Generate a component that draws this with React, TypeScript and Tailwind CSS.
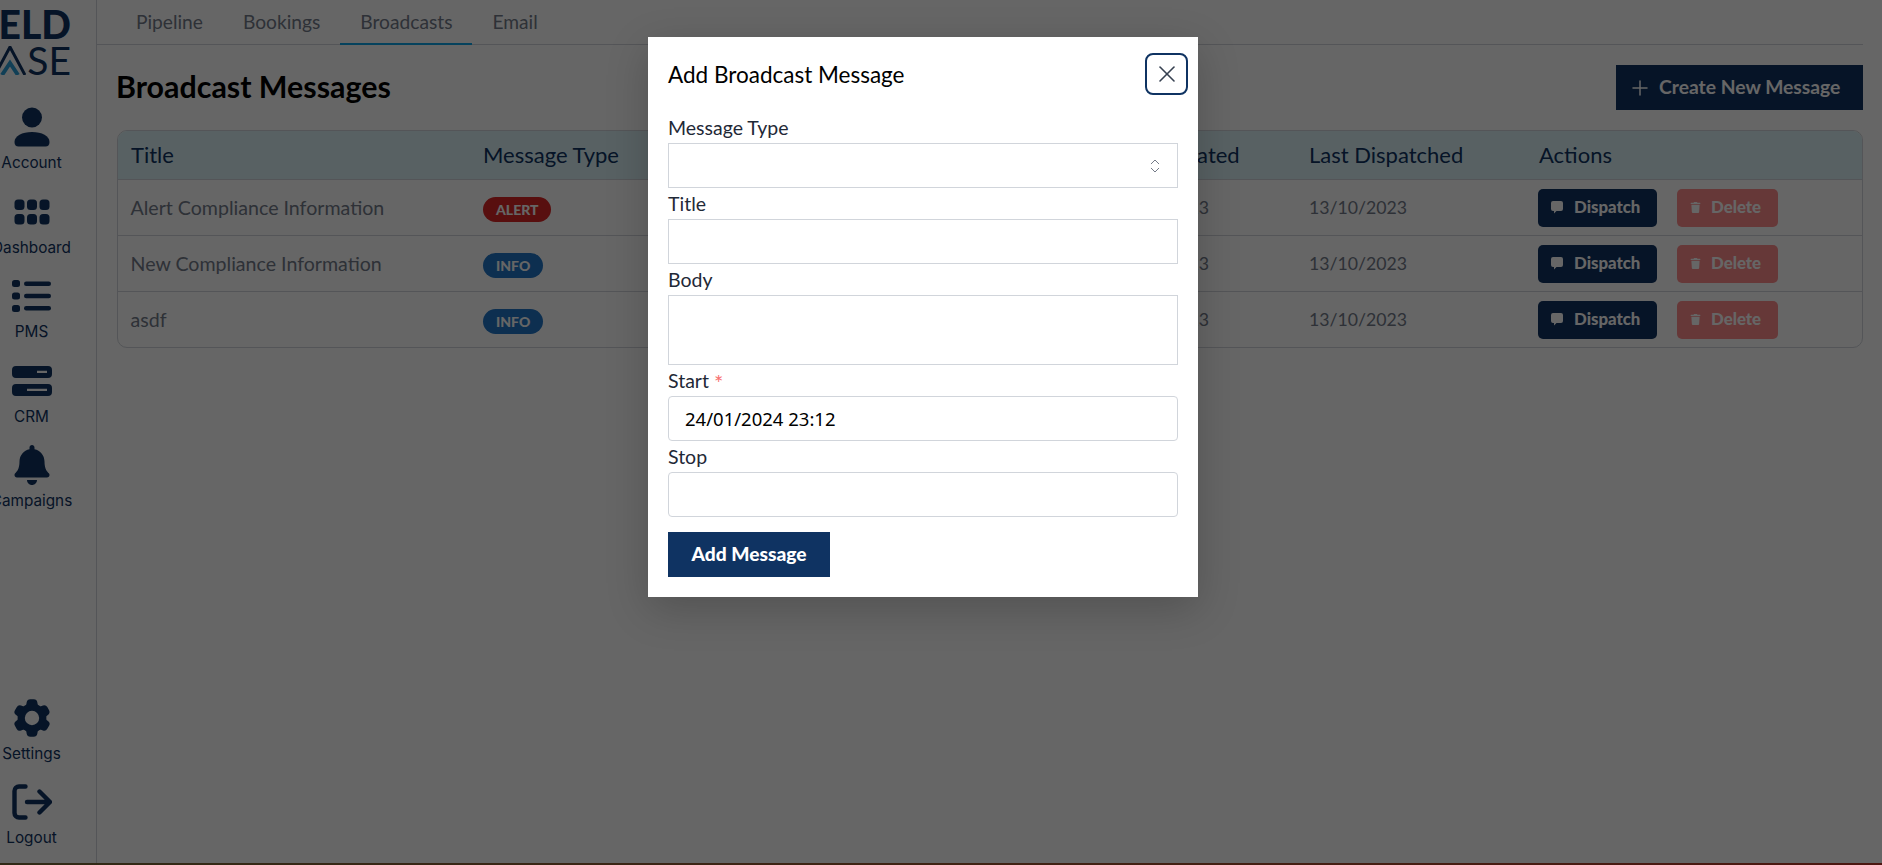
import React from 'react';
import { X, Plus, ChevronsUpDown } from 'lucide-react';
import { FaBell, FaTrash } from 'react-icons/fa';
import { HiCog6Tooth } from 'react-icons/hi2';

const NAVY = '#0f3362';

const AccountIcon = () => (
  <svg width="36" height="40" viewBox="0 0 36 40" fill={NAVY}>
    <circle cx="18" cy="10.5" r="10" />
    <path d="M0.5 35C0.5 29 8 25 18 25s17.5 4 17.5 10c0 3-1.5 4.5-4 4.5H4.5C2 39.5 .5 38 .5 35z" />
  </svg>
);

const DashboardIcon = () => (
  <svg width="36" height="26" viewBox="0 0 36 26" fill={NAVY}>
    <rect x="0.5" y="0.5" width="10" height="10.5" rx="3.5" />
    <rect x="13" y="0.5" width="10" height="10.5" rx="3.5" />
    <rect x="25.5" y="0.5" width="10" height="10.5" rx="3.5" />
    <rect x="0.5" y="15" width="10" height="10.5" rx="3.5" />
    <rect x="13" y="15" width="10" height="10.5" rx="3.5" />
    <rect x="25.5" y="15" width="10" height="10.5" rx="3.5" />
  </svg>
);

const ListIcon = () => (
  <svg width="40" height="32" viewBox="0 0 40 32" fill={NAVY}>
    <rect x="0" y="0" width="8" height="7" rx="2.5" />
    <rect x="0" y="12.5" width="8" height="7" rx="2.5" />
    <rect x="0" y="25" width="8" height="7" rx="2.5" />
    <rect x="12" y="1.5" width="27" height="4.5" rx="2.2" />
    <rect x="12" y="13.7" width="27" height="4.5" rx="2.2" />
    <rect x="12" y="26" width="27" height="4.5" rx="2.2" />
  </svg>
);

const ServerIcon = () => (
  <svg width="40" height="30" viewBox="0 0 40 30" fill={NAVY}>
    <path fillRule="evenodd" d="M4 0h32a4 4 0 0 1 4 4v4a4 4 0 0 1-4 4H4a4 4 0 0 1-4-4V4a4 4 0 0 1 4-4zm21 4.8v2.2h10V4.8H25z" />
    <path fillRule="evenodd" d="M4 18h32a4 4 0 0 1 4 4v4a4 4 0 0 1-4 4H4a4 4 0 0 1-4-4v-4a4 4 0 0 1 4-4zm11 4.8v2.2h20v-2.2H15z" />
  </svg>
);

const LogoutIcon = () => (
  <svg width="40" height="36" viewBox="0 0 40 36" fill="none" stroke={NAVY} strokeWidth="4.4" strokeLinecap="round" strokeLinejoin="round">
    <path d="M13.5 2.5H7a4.5 4.5 0 0 0-4.5 4.5v22A4.5 4.5 0 0 0 7 33.5h6.5" />
    <path d="M15 18h22.5M27.5 7.5 38 18 27.5 28.5" />
  </svg>
);

const BubbleIcon = () => (
  <svg width="12" height="13" viewBox="0 0 12 13" fill="currentColor">
    <path d="M2 0h8a2 2 0 0 1 2 2v6a2 2 0 0 1-2 2H5.5L3 12.6V10H2a2 2 0 0 1-2-2V2a2 2 0 0 1 2-2z" />
  </svg>
);

const topNav = [
  { label: 'Account', icon: <AccountIcon /> },
  { label: 'Dashboard', icon: <DashboardIcon /> },
  { label: 'PMS', icon: <ListIcon /> },
  { label: 'CRM', icon: <ServerIcon /> },
  { label: 'Campaigns', icon: <FaBell size={40} color={NAVY} /> },
];

const bottomNav = [
  { label: 'Settings', icon: <HiCog6Tooth size={46} color={NAVY} /> },
  { label: 'Logout', icon: <LogoutIcon /> },
];

const rows = [
  { title: 'Alert Compliance Information', type: 'ALERT' },
  { title: 'New Compliance Information', type: 'INFO' },
  { title: 'asdf', type: 'INFO' },
];

const gridCols = 'grid grid-cols-[352px_627px_198px_230px_1fr] items-center';

const NavItem = ({ label, icon, bottom }: { label: string; icon: React.ReactNode; bottom?: boolean }) => (
  <div className={`flex flex-col items-center ${bottom ? 'h-[84px]' : 'h-[84.5px]'}`}>
    <div className="h-[50px] flex items-center justify-center">{icon}</div>
    <span className="h-[22px] leading-[22px] text-[15.3px] text-[#0f3362] font-['Inter',sans-serif]">{label}</span>
  </div>
);

const Field = ({ label, required, children }: { label: string; required?: boolean; children: React.ReactNode }) => (
  <div>
    <label className="block h-[31px] leading-[32px] text-[19.5px] text-[#1f2937]">
      {label}
      {required && <span className="text-[#f87171] ml-[5px] text-[22px] leading-[20px] align-[-3px]">*</span>}
    </label>
    {children}
  </div>
);

export default function App() {
  return (
    <div className="relative w-[1882px] h-[865px] overflow-hidden bg-white font-['Lato',sans-serif]">
      <div className="flex h-[863px]">
        {/* sidebar is pushed off the left edge, same as the scrolled page */}
        <aside className="ml-[-33px] w-[130px] shrink-0 border-r border-[#d1d5db] flex flex-col justify-between pb-[2px]">
          <div>
            <div className="h-[102px] pt-[5px] pr-[25px] flex flex-col items-end text-[#0f3362]">
              <span className="h-[38px] leading-[38px] text-[39px] font-black">FIELD</span>
              <div className="flex items-center h-[29px] mt-[3px]">
                <svg width="32" height="29" viewBox="0 0 32 29" className="mr-[1px]">
                  <path d="M1 29 16 1l15 28" fill="none" stroke={NAVY} strokeWidth="3" />
                  <path d="M8 29 16 17l8 12" fill="none" stroke="#2b9fd8" strokeWidth="4" />
                </svg>
                <span className="leading-[29px] text-[39px] font-normal">SE</span>
              </div>
            </div>
            {topNav.map((item) => (
              <NavItem key={item.label} {...item} />
            ))}
          </div>
          <div>
            {bottomNav.map((item) => (
              <NavItem key={item.label} {...item} bottom />
            ))}
          </div>
        </aside>

        <main className="flex-1 min-w-0 pr-[19px]">
          <nav className="h-[45px] border-b border-[#d1d5db] flex pl-[19px]">
            {['Pipeline', 'Bookings', 'Broadcasts', 'Email'].map((tab) => (
              <div
                key={tab}
                className={`h-[45px] px-[20px] leading-[44px] text-[19.2px] text-[#737b8a] ${tab === 'Broadcasts' ? 'border-b-2 border-[#0ea5e9]' : ''}`}
              >
                {tab}
              </div>
            ))}
          </nav>

          <div className="pl-[20px]">
            <div className="flex items-start justify-between h-[85px] pt-[19px]">
              <h1 className="ml-[-1px] h-[45px] leading-[45px] text-[30.4px] font-bold text-black">Broadcast Messages</h1>
              <button className="mt-[1px] w-[247px] h-[45px] bg-[#0f3362] text-white flex items-center pl-[12px] text-[19.3px] font-bold">
                <Plus size={24} strokeWidth={1.5} className="mr-[7px]" />
                Create New Message
              </button>
            </div>

            <div className="border border-[#d1d5db] rounded-[10px] overflow-hidden">
              <div className={`${gridCols} h-[48px] pb-[2px] bg-[#dcf3f8] text-[22px] text-[#0f3362]`}>
                <div className="pl-[13px]">Title</div>
                <div className="pl-[13px]">Message Type</div>
                <div className="pl-[14px]">Date Created</div>
                <div className="pl-[14px]">Last Dispatched</div>
                <div className="pl-[14px]">Actions</div>
              </div>
              {rows.map((row) => (
                <div key={row.title} className={`${gridCols} h-[56px] border-t border-[#d1d5db] text-[19.6px] text-[#737b8a]`}>
                  <div className="pl-[12.5px]">{row.title}</div>
                  <div className="pl-[13px] pt-[3px] flex">
                    <span
                      className={`inline-flex items-center h-[25px] px-[13px] rounded-full text-[14px] font-black text-white ${row.type === 'ALERT' ? 'bg-[#dc2626]' : 'bg-[#2176c7]'}`}
                    >
                      {row.type}
                    </span>
                  </div>
                  <div className="pl-[14px] pt-[1px] text-[17.7px]">13/10/2023</div>
                  <div className="pl-[14px] pt-[1px] text-[17.7px]">13/10/2023</div>
                  <div className="pl-[13px] flex gap-[20px]">
                    <button className="w-[119px] h-[38px] pb-[1px] rounded-[5px] bg-[#0f3362] text-white flex items-center pl-[13px] text-[16.8px] font-black">
                      <BubbleIcon />
                      <span className="ml-[11px]">Dispatch</span>
                    </button>
                    <button className="w-[101px] h-[38px] pb-[1px] rounded-[5px] bg-[#ff8c8c] text-white flex items-center pl-[13px] text-[16.8px] font-black">
                      <FaTrash size={11} />
                      <span className="ml-[10px]">Delete</span>
                    </button>
                  </div>
                </div>
              ))}
            </div>
          </div>
        </main>
      </div>
      <div className="h-[2px] bg-gradient-to-r from-[#7a6a3a] to-[#c0392b]" />

      {/* modal */}
      <div className="absolute inset-0 bg-black/60 flex justify-center items-start pt-[37px] pr-[36px]">
        <div className="w-[550px] h-[560px] bg-white px-[20px] shadow-[0_12px_40px_rgba(0,0,0,0.2)]">
          <div className="relative h-[75px] flex items-center">
            <h2 className="text-[22.5px] font-normal text-black">Add Broadcast Message</h2>
            <button className="absolute right-[-10px] top-[16px] w-[43px] h-[42px] rounded-[8px] border-2 border-[#0f3362] flex items-center justify-center text-[#374151]">
              <X size={28} strokeWidth={1.4} />
            </button>
          </div>
          <Field label="Message Type">
            <div className="h-[45px] border-[1.5px] border-[#d1d5db] flex items-center justify-end pr-[13px] text-[#6b7280]">
              <ChevronsUpDown size={18} strokeWidth={1.25} />
            </div>
          </Field>
          <Field label="Title">
            <input className="block w-full h-[45px] border-[1.5px] border-[#d1d5db] outline-none" />
          </Field>
          <Field label="Body">
            <textarea className="block w-full h-[70px] border-[1.5px] border-[#d1d5db] outline-none resize-none" />
          </Field>
          <Field label="Start" required>
            <input
              readOnly
              value="24/01/2024 23:12"
              className="block w-full h-[45px] px-[16px] rounded-[4px] border-[1.5px] border-[#d1d5db] outline-none text-[18.5px] text-black font-['Noto_Sans',sans-serif]"
            />
          </Field>
          <Field label="Stop">
            <input className="block w-full h-[45px] rounded-[4px] border-[1.5px] border-[#d1d5db] outline-none" />
          </Field>
          <button className="mt-[15px] w-[162px] h-[45px] bg-[#0f3362] text-white text-[19.2px] font-black">Add Message</button>
        </div>
      </div>
    </div>
  );
}
